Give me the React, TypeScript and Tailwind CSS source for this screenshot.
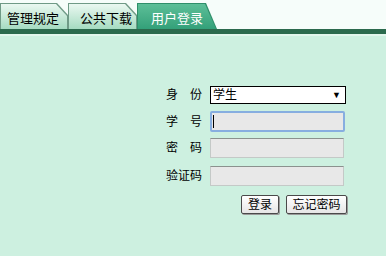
import React from 'react';

const font = "font-['Liberation_Sans','Noto_Sans_CJK_SC',sans-serif]";

function Tab({ label, width, pad }: { label: string; width: string; pad: string }) {
  return (
    <div className={`h-[26px] bg-[#6f9a86] [clip-path:polygon(0_0,calc(100%-11px)_0,100%_12px,100%_100%,0_100%)] ${width}`}>
      <div className="h-[25px] mt-px ml-px bg-gradient-to-b from-[#eaf8f1] to-[#a5dbc1] text-black [clip-path:polygon(0_0,calc(100%-12px)_0,calc(100%-1px)_12px,calc(100%-1px)_100%,0_100%)]">
        <div className={`pt-[8px] text-[13px] leading-[14px] ${pad}`}>{label}</div>
      </div>
    </div>
  );
}

function Label({ text }: { text: string }) {
  const chars = text.split('');
  return (
    <div className="flex justify-between w-[36px] text-[12px] leading-[14px] text-black">
      {chars.map((c, i) => (
        <span key={i}>{c}</span>
      ))}
    </div>
  );
}

export default function App() {
  return (
    <div className={`w-[386px] h-[256px] bg-[#cdf0e0] overflow-hidden ${font}`}>
      <div className="h-[29px] bg-[#f6fdfa] flex items-end">
        <Tab label="管理规定" width="w-[68px]" pad="pl-[6px]" />
        <Tab label="公共下载" width="w-[69px]" pad="pl-[11px]" />
        <div className="h-[26px] w-[80px] bg-[#2f8f6a] [clip-path:polygon(0_0,calc(100%-11px)_0,100%_100%,0_100%)]">
          <div className="h-[25px] mt-px ml-px bg-gradient-to-b from-[#5cbf98] to-[#33a079] text-white [clip-path:polygon(0_0,calc(100%-12px)_0,calc(100%-1px)_100%,0_100%)]">
            <div className="pt-[8px] pl-[13px] text-[13px] leading-[14px]">用户登录</div>
          </div>
        </div>
      </div>
      <div className="h-[5px] bg-[#2b6a4d]" />
      <div className="h-[2px] bg-[#e2f6ec]" />

      <div className="pt-[50px] pl-[166px] flex flex-col">
        <div className="flex items-center h-[18px]">
          <Label text="身份" />
          <div className="ml-[8px] w-[136px] h-[18px] bg-white border border-black flex items-center justify-between px-[2px] text-[12px] leading-[14px]">
            <span>学生</span>
            <span className="text-[9px] mr-[2px]">▼</span>
          </div>
        </div>
        <div className="flex items-center h-[21px] mt-[7px]">
          <Label text="学号" />
          <div className="ml-[8px] w-[135px] h-[21px] bg-[#e8e8e8] border-2 border-[#87aee0] rounded-[2px] flex items-center pl-[1px]">
            <span className="w-px h-[13px] bg-black" />
          </div>
        </div>
        <div className="flex items-center h-[20px] mt-[6px]">
          <Label text="密码" />
          <div className="ml-[8px] w-[134px] h-[20px] bg-[#e8e8e8] border border-[#c4c9c7] border-t-[#8b918e]" />
        </div>
        <div className="flex items-center h-[20px] mt-[8px]">
          <Label text="验证码" />
          <div className="ml-[8px] w-[134px] h-[20px] bg-[#e8e8e8] border border-[#c4c9c7] border-t-[#8b918e]" />
        </div>
        <div className="flex gap-[7px] mt-[9px] ml-[75px]">
          <button className="w-[38px] h-[19px] bg-gradient-to-b from-white to-[#e6e6e6] border border-[#4a4a4a] rounded-[2px] text-[12px] leading-[14px] text-black shadow-[1px_1px_0_#9a9a9a]">
            登录
          </button>
          <button className="w-[61px] h-[19px] bg-gradient-to-b from-white to-[#e6e6e6] border border-[#4a4a4a] rounded-[2px] text-[12px] leading-[14px] text-black shadow-[1px_1px_0_#9a9a9a]">
            忘记密码
          </button>
        </div>
      </div>
    </div>
  );
}
